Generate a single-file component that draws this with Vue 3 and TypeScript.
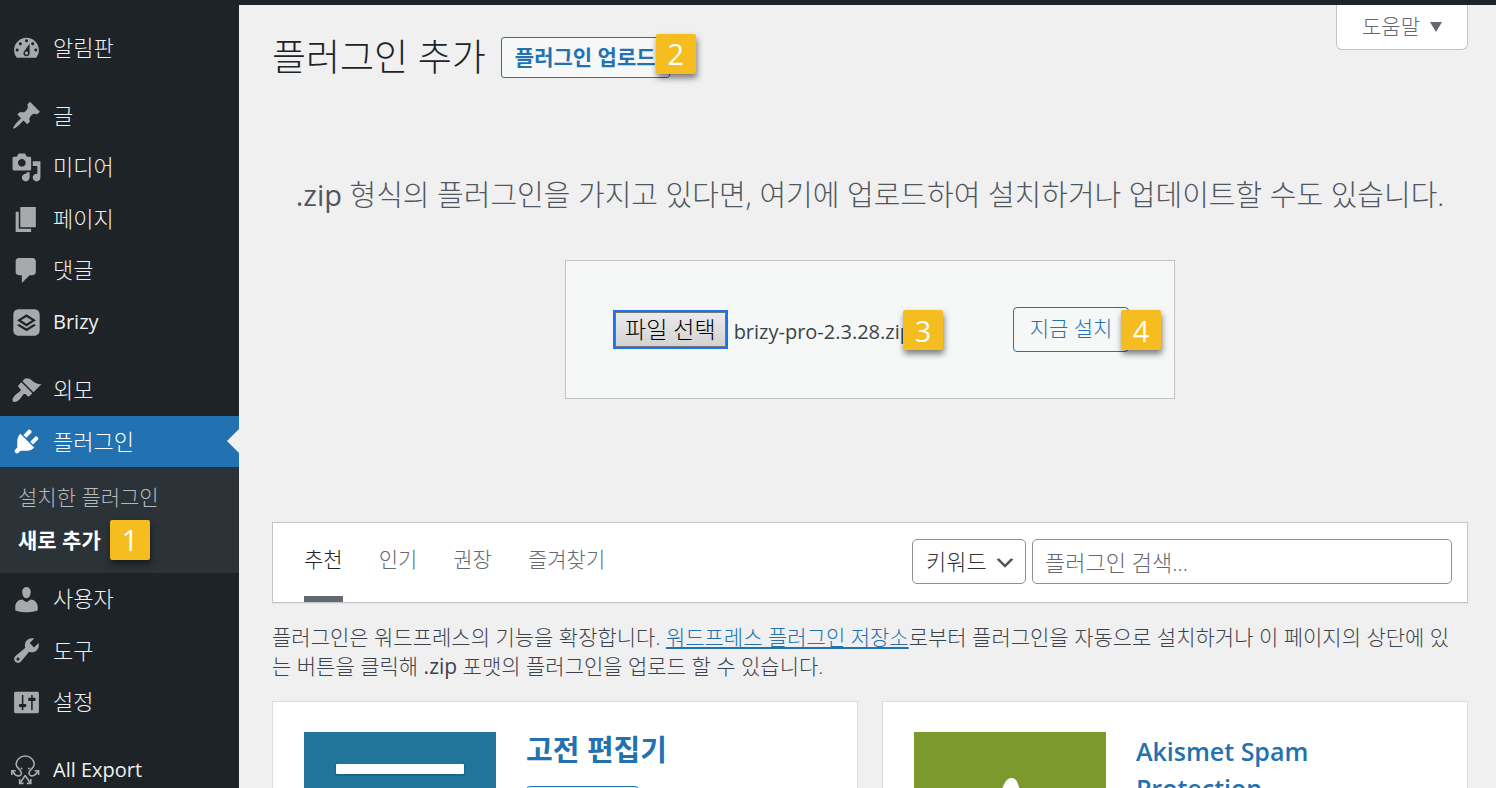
<script setup lang="ts">
import { ref } from 'vue'

interface SubItem {
  label: string
  current?: boolean
  step?: number
}

interface MenuItem {
  label: string
  icon: string
  latin?: boolean
  current?: boolean
  children?: SubItem[]
}

const icons: Record<string, string> = {
  dashboard:
    'M3.76 16h12.48c1.1-1.37 1.76-3.11 1.76-5 0-4.42-3.58-8-8-8s-8 3.58-8 8c0 1.89.66 3.63 1.76 5zM10 4c.55 0 1 .45 1 1s-.45 1-1 1-1-.45-1-1 .45-1 1-1zM6 6c.55 0 1 .45 1 1s-.45 1-1 1-1-.45-1-1 .45-1 1-1zm8 0c.55 0 1 .45 1 1s-.45 1-1 1-1-.45-1-1 .45-1 1-1zm-5.37 5.55L12 7v6c0 1.1-.9 2-2 2s-2-.9-2-2c0-.57.24-1.08.63-1.45zM4 10c.55 0 1 .45 1 1s-.45 1-1 1-1-.45-1-1 .45-1 1-1zm12 0c.55 0 1 .45 1 1s-.45 1-1 1-1-.45-1-1 .45-1 1-1zm-5 3c0-.55-.45-1-1-1s-1 .45-1 1 .45 1 1 1 1-.45 1-1z',
  post: 'M10.44 3.02l1.82-1.82 6.36 6.35-1.83 1.82c-1.05-.68-2.48-.57-3.41.36l-.75.75c-.92.93-1.04 2.35-.35 3.41l-1.83 1.82-2.41-2.41-2.8 2.79c-.42.42-3.38 2.71-3.8 2.29s1.86-3.39 2.28-3.81l2.79-2.79L4.1 9.36l1.83-1.82c1.05.69 2.48.57 3.4-.36l.75-.75c.93-.92 1.05-2.35.36-3.41z',
  media:
    'M13 11V4c0-.55-.45-1-1-1h-1.67L9 1H5L3.67 3H2c-.55 0-1 .45-1 1v7c0 .55.45 1 1 1h10c.55 0 1-.45 1-1zM7 4.5c1.38 0 2.5 1.12 2.5 2.5S8.38 9.5 7 9.5 4.5 8.38 4.5 7 5.62 4.5 7 4.5zM14 6h5v10.5c0 1.38-1.12 2.5-2.5 2.5S14 17.88 14 16.5s1.12-2.5 2.5-2.5c.17 0 .34.02.5.05V9h-3V6zm-4 8.05V13h2v3.5c0 1.38-1.12 2.5-2.5 2.5S7 17.88 7 16.5 8.12 14 9.5 14c.17 0 .34.02.5.05z',
  page: 'M6 15V2h10v13H6zm-1 1h8v2H3V5h2v11z',
  comments: 'M5 2h9c1.1 0 2 .9 2 2v7c0 1.1-.9 2-2 2h-2l-5 5v-5H5c-1.1 0-2-.9-2-2V4c0-1.1.9-2 2-2z',
  brizy:
    'M5.2 1.5h9.6c2.3 0 3.7 1.4 3.7 3.7v9.6c0 2.3-1.4 3.7-3.7 3.7H5.2c-2.3 0-3.7-1.4-3.7-3.7V5.2c0-2.3 1.4-3.7 3.7-3.7zM10 4.7L3.9 8.6 10 12.5l6.1-3.9zM10 6.4l3.5 2.2L10 10.8 6.5 8.6zM5.2 10.9L3.9 11.7 10 15.6l6.1-3.9-1.3-.8L10 13.9z',
  appearance:
    'M14.48 11.06L7.41 3.99l1.5-1.5c.5-.56 2.3-.47 3.51.32 1.21.8 1.43 1.28 2.91 2.1 1.18.64 2.45 1.26 4.45.85zm-.71.71L6.7 4.7 4.93 6.47c-.39.39-.39 1.02 0 1.41l1.06 1.06c.39.39.39 1.03 0 1.42-.6.6-1.43 1.11-2.21 1.69-.35.26-.7.53-1.01.84C1.43 14.23.4 16.08 1.4 17.07c.99 1 2.84-.03 4.18-1.36.31-.31.58-.66.85-1.02.57-.78 1.08-1.61 1.69-2.21.39-.39 1.02-.39 1.41 0l1.06 1.06c.39.39 1.02.39 1.41 0z',
  plugins:
    'M13.11 4.36L9.87 7.6 8 5.73l3.24-3.24c.35-.34 1.05-.2 1.56.32.52.51.66 1.21.31 1.55zm-8 1.77l.91-1.12 9.01 9.01-1.19.84c-.71.71-2.63 1.16-3.82 1.16H6.14L4.9 17.26c-.59.59-1.54.59-2.12 0-.59-.58-.59-1.53 0-2.12l1.24-1.24v-3.88c0-1.13.4-3.19 1.09-3.89zm7.26 3.97l3.24-3.24c.34-.35 1.04-.21 1.55.31.52.51.66 1.21.31 1.55l-3.24 3.25z',
  users:
    'M10 9.25c-2.27 0-2.73-3.44-2.73-3.44C7 4.02 7.82 2 9.97 2c2.16 0 2.98 2.02 2.71 3.81 0 0-.41 3.44-2.68 3.44zm0 2.57L12.72 10c2.39 0 4.52 2.33 4.52 4.53v2.49s-3.65 1.13-7.24 1.13c-3.65 0-7.24-1.13-7.24-1.13v-2.49c0-2.25 1.94-4.48 4.47-4.48z',
  tools:
    'M16.68 9.77c-1.34 1.34-3.3 1.67-4.95.99l-5.41 6.52c-.99.99-2.59.99-3.58 0s-.99-2.59 0-3.57l6.52-5.42c-.68-1.65-.35-3.61.99-4.95 1.28-1.28 3.12-1.62 4.72-1.06l-2.89 2.89 2.82 2.82 2.86-2.87c.53 1.58.18 3.39-1.08 4.65zM3.81 16.21c.4.39 1.04.39 1.43 0 .4-.4.4-1.04 0-1.43-.39-.4-1.03-.4-1.43 0-.39.39-.39 1.03 0 1.43z',
  settings:
    'M18 16V4c0-.55-.45-1-1-1H3c-.55 0-1 .45-1 1v12c0 .55.45 1 1 1h14c.55 0 1-.45 1-1zM8 11h1c.55 0 1 .45 1 1s-.45 1-1 1H8v1.5c0 .28-.22.5-.5.5s-.5-.22-.5-.5V13H6c-.55 0-1-.45-1-1s.45-1 1-1h1V5.5c0-.28.22-.5.5-.5s.5.22.5.5V11zm5-2h-1c-.55 0-1-.45-1-1s.45-1 1-1h1V5.5c0-.28.22-.5.5-.5s.5.22.5.5V7h1c.55 0 1 .45 1 1s-.45 1-1 1h-1v5.5c0 .28-.22.5-.5.5s-.5-.22-.5-.5V9z',
}

const menuGroups: MenuItem[][] = [
  [{ label: '알림판', icon: 'dashboard' }],
  [
    { label: '글', icon: 'post' },
    { label: '미디어', icon: 'media' },
    { label: '페이지', icon: 'page' },
    { label: '댓글', icon: 'comments' },
    { label: 'Brizy', icon: 'brizy', latin: true },
  ],
  [
    { label: '외모', icon: 'appearance' },
    {
      label: '플러그인',
      icon: 'plugins',
      current: true,
      children: [{ label: '설치한 플러그인' }, { label: '새로 추가', current: true, step: 1 }],
    },
    { label: '사용자', icon: 'users' },
    { label: '도구', icon: 'tools' },
    { label: '설정', icon: 'settings' },
  ],
  [{ label: 'All Export', icon: 'octopus', latin: true }],
]

const tabs = ['추천', '인기', '권장', '즐겨찾기']
const activeTab = ref('추천')
const searchType = ref('키워드')
const query = ref('')
</script>

<template>
  <div class="admin">
    <div class="adminbar"></div>
    <div class="columns">
      <nav class="sidebar" aria-label="메인 메뉴">
        <ul v-for="(group, g) in menuGroups" :key="g" class="group">
          <li v-for="item in group" :key="item.label">
            <a href="#" class="item" :class="{ current: item.current }">
              <svg v-if="item.icon === 'octopus'" class="icon line" viewBox="0 0 31 31" aria-hidden="true">
                <path d="M5.5 20.5c2.300 1 4.300 0 4.800-1.500.5-1.500-.4-2.600-1.500-4C6.900 12.800 5.200 11.500 5.200 9.600a9 8.600 0 0 1 18 0c0 1.900-1.700 3.200-3.600 5.400-1.100 1.400-2 2.500-1.500 4 .5 1.500 2.500 2.500 4.800 1.500M5.500 20.500C3 19.500 3.200 18 1.300 16M22.900 20.500c2.500-1 2.300-2.500 4.200-4.500M.8 20v-4.300h4M23.600 15.700h4V20M14.200 20.500l-5 7.300M14.200 20.500l5 7.300M8.600 24v4.400h4M19.800 24v4.400h-4" />
                <circle cx="10.500" cy="13.500" r="1" class="eye" />
                <circle cx="17.900" cy="13.500" r="1" class="eye" />
              </svg>
              <svg v-else class="icon" viewBox="0 0 20 20" aria-hidden="true">
                <path :d="icons[item.icon]" fill-rule="evenodd" />
              </svg>
              <span :class="{ latin: item.latin }">{{ item.label }}</span>
            </a>
            <ul v-if="item.children" class="submenu">
              <li v-for="sub in item.children" :key="sub.label">
                <a href="#" :class="{ current: sub.current }">
                  {{ sub.label }}<span v-if="sub.step" class="step step-menu">{{ sub.step }}</span>
                </a>
              </li>
            </ul>
          </li>
        </ul>
      </nav>

      <main class="content">
        <button type="button" class="help">도움말 <span class="triangle"></span></button>

        <header class="heading">
          <h1>플러그인 추가</h1>
          <a href="#" class="upload-link">플러그인 업로드<span class="step step-upload">2</span></a>
        </header>

        <section class="upload">
          <p><span class="zip">.zip</span> 형식의 플러그인을 가지고 있다면, 여기에 업로드하여 설치하거나 업데이트할 수도 있습니다.</p>
          <form class="upload-form" @submit.prevent>
            <div class="file">
              <label class="file-button" for="pluginzip">파일 선택<input id="pluginzip" type="file" accept=".zip" /></label>
              <span class="file-name latin">brizy-pro-2.3.28.zip</span>
              <span class="step step-file">3</span>
            </div>
            <button type="submit" class="install">지금 설치<span class="step step-install">4</span></button>
          </form>
        </section>

        <div class="filter">
          <div class="tabs">
            <a
              v-for="tab in tabs"
              :key="tab"
              href="#"
              :class="{ active: tab === activeTab }"
              @click.prevent="activeTab = tab"
              >{{ tab }}</a
            >
          </div>
          <form class="search" @submit.prevent>
            <div class="select">
              <select v-model="searchType" aria-label="검색 기준">
                <option>키워드</option>
                <option>글쓴이</option>
                <option>태그</option>
              </select>
              <svg viewBox="0 0 20 20" aria-hidden="true"><path d="M5 6l5 5 5-5 2 1-7 7-7-7 2-1z" /></svg>
            </div>
            <input v-model="query" type="search" placeholder="플러그인 검색..." aria-label="플러그인 검색" />
          </form>
        </div>

        <p class="intro">
          플러그인은 워드프레스의 기능을 확장합니다. <a href="#">워드프레스 플러그인 저장소</a>로부터 플러그인을 자동으로 설치하거나 이 페이지의 상단에 있는 버튼을 클릭해 <span class="zip">.zip</span> 포맷의 플러그인을 업로드 할 수 있습니다.
        </p>

        <div class="cards">
          <article class="card">
            <svg class="art" viewBox="0 0 192 192" aria-hidden="true">
              <rect width="192" height="192" fill="#21759b" />
              <rect x="31" y="32" width="130" height="12" rx="2" fill="#14597a" opacity=".5" />
              <rect x="32" y="32" width="128" height="10" rx="1" fill="#fff" />
            </svg>
            <div class="info">
              <h3><a href="#">고전 편집기</a></h3>
              <button type="button" class="card-button">지금 설치</button>
            </div>
          </article>
          <article class="card">
            <svg class="art" viewBox="0 0 192 192" aria-hidden="true">
              <rect width="192" height="192" fill="#7b992c" />
              <path d="M87 60c3-9 6-14 10-14s6 2 8 9l25 85h-20l-14-58-20 58H58z" fill="#fff" />
            </svg>
            <div class="info">
              <h3><a href="#" class="latin">Akismet Spam Protection</a></h3>
              <button type="button" class="card-button">지금 설치</button>
            </div>
          </article>
        </div>
      </main>
    </div>
  </div>
</template>

<style>
body {
  overflow: hidden;
  background: #f0f0f1;
}
</style>

<style scoped>
.admin {
  height: 100vh;
  overflow: hidden;
  color: #3c434a;
  background: #f0f0f1;
  font-family: 'Open Sans', 'Noto Sans CJK KR', sans-serif;
  font-size: 21px;
  font-weight: 300;
  line-height: 1.4;
}

.admin *,
.admin *::before,
.admin *::after {
  box-sizing: border-box;
}

a {
  color: #2271b1;
}

ul {
  margin: 0;
  padding: 0;
  list-style: none;
}

button,
input,
select {
  margin: 0;
  font: inherit;
}

.latin {
  font-size: 20px;
  font-weight: 400;
}

.zip {
  font-weight: 400;
}

.adminbar {
  height: 5px;
  background: #1d2327;
}

.columns {
  display: flex;
  align-items: stretch;
}

/* Sidebar */
.sidebar {
  display: flex;
  flex: none;
  flex-direction: column;
  gap: 16px;
  width: 239px;
  min-height: 100vh;
  padding-top: 17px;
  background: #1d2327;
}

.item {
  position: relative;
  display: flex;
  align-items: center;
  gap: 11px;
  min-height: 51px;
  padding: 11px 11px 12px;
  color: #f0f0f1;
  font-size: 22px;
  line-height: 1.3;
  text-decoration: none;
}

.item .latin {
  line-height: 29px;
}

.item.current {
  color: #fff;
  background: #2271b1;
}

.item.current::after {
  position: absolute;
  top: 50%;
  right: 0;
  margin-top: -12px;
  border: solid transparent;
  border-width: 12px 12px 12px 0;
  border-right-color: #f0f0f1;
  content: '';
}

.icon {
  flex: none;
  width: 31px;
  height: 31px;
  margin: -1px 0 -3px;
  fill: #a7aaad;
}

.current .icon {
  fill: #fff;
}

.icon.line {
  fill: none;
  stroke: #a7aaad;
  stroke-width: 1.6;
}

.icon .eye {
  fill: #a7aaad;
  stroke: none;
}

.submenu {
  padding: 10px 0 11px;
  background: #2c3338;
}

.submenu a {
  position: relative;
  display: block;
  width: fit-content;
  padding: 6px 0 7px 18px;
  color: #b4b9be;
  text-decoration: none;
}

.submenu a.current {
  color: #fff;
  font-weight: 600;
}

/* Numbered step markers */
.step {
  position: absolute;
  z-index: 1;
  display: flex;
  align-items: center;
  justify-content: center;
  width: 40px;
  height: 40px;
  border-radius: 2px;
  color: #fff;
  background: #f5bd1f;
  box-shadow: 1px 4px 6px rgb(0 0 0 / 50%);
  font-size: 29px;
  font-weight: 400;
  line-height: 1;
}

.step-menu {
  top: 0;
  left: 110px;
}

.step-upload {
  top: -4px;
  left: 154px;
}

.step-file {
  top: 3px;
  left: 290px;
}

.step-install {
  top: 2px;
  left: 107px;
}

/* Main column */
.content {
  position: relative;
  flex: 1;
  min-width: 0;
  padding: 26px 28px 0 33px;
}

.help {
  position: absolute;
  top: 0;
  right: 28px;
  display: flex;
  align-items: center;
  gap: 10px;
  height: 45px;
  padding: 0 25px;
  border: 1px solid #c3c4c7;
  border-top: 0;
  border-radius: 0 0 6px 6px;
  color: #646970;
  background: #fff;
}

.triangle {
  border: solid transparent;
  border-width: 10px 6px 0;
  border-top-color: #646970;
}

.heading {
  display: flex;
  align-items: center;
  gap: 15px;
}

h1 {
  margin: 0;
  color: #1d2327;
  font-size: 37px;
  font-weight: 300;
  line-height: 52px;
}

.upload-link {
  position: relative;
  padding: 4px 13px;
  border: 1px solid #2271b1;
  border-radius: 3px;
  background: #f6f7f7;
  font-weight: 600;
  line-height: 31px;
  text-decoration: none;
}

.upload {
  display: flex;
  flex-direction: column;
  align-items: center;
  padding: 87px 0 123px;
}

.upload p {
  margin: 0;
  color: #50575e;
  font-size: 29px;
  line-height: 50px;
  white-space: nowrap;
}

.upload-form {
  display: flex;
  align-items: flex-start;
  justify-content: space-between;
  width: 610px;
  margin-top: 40px;
  padding: 46px 45px 46px 47px;
  border: 1px solid #c3c4c7;
  background: #f6f7f7;
}

.file {
  position: relative;
  display: flex;
  align-items: center;
  gap: 6px;
  padding-top: 3px;
}

.file-button {
  position: relative;
  padding: 0 10px;
  border: 2px solid #1a73e8;
  color: #000;
  background: linear-gradient(#ececec, #d2d2d2);
  box-shadow: inset 0 0 0 1px #767676;
  font-size: 23px;
  line-height: 35px;
}

.file-button input {
  position: absolute;
  inset: 0;
  width: 100%;
  opacity: 0;
}

.file-name {
  padding-top: 4px;
}

.install {
  position: relative;
  width: 116px;
  height: 45px;
  padding: 0 0 1px;
  border: 1px solid #2271b1;
  border-radius: 4px;
  color: #2271b1;
  background: #f6f7f7;
}

.filter {
  display: flex;
  justify-content: space-between;
  padding: 0 15px 0 31px;
  border: 1px solid #c3c4c7;
  background: #fff;
  box-shadow: 0 1px 1px rgb(0 0 0 / 4%);
}

.tabs {
  display: flex;
  gap: 36px;
}

.tabs a {
  padding: 21px 0 22px;
  border-bottom: 6px solid transparent;
  color: #646970;
  line-height: 30px;
  text-decoration: none;
}

.tabs .active {
  border-color: #646970;
  color: #1d2327;
}

.search {
  display: flex;
  gap: 6px;
  padding-top: 16px;
}

.select {
  position: relative;
}

.search select,
.search input {
  height: 45px;
  border: 1px solid #8c8f94;
  border-radius: 5px;
  color: #2c3338;
  background: #fff;
  font-size: 22px;
  appearance: none;
}

.search select {
  width: 114px;
  padding: 0 12px 0 13px;
}

.search input {
  width: 420px;
  padding: 0 12px;
}

.search input::placeholder {
  color: #646970;
  opacity: 1;
}

.select svg {
  position: absolute;
  top: 12px;
  right: 9px;
  width: 24px;
  height: 24px;
  fill: #50575e;
  pointer-events: none;
}

.intro {
  margin: 20px 0 19px;
  word-break: break-all;
}

.cards {
  display: grid;
  grid-template-columns: 1fr 1fr;
  gap: 24px;
}

.card {
  display: flex;
  gap: 30px;
  padding: 30px 31px;
  border: 1px solid #dcdcde;
  background: #fff;
}

.art {
  flex: none;
  width: 192px;
  height: 192px;
}

.info {
  max-width: 220px;
}

h3 {
  margin: 0 0 18px;
  font-size: 29px;
  font-weight: 600;
  line-height: 36px;
}

h3 a {
  text-decoration: none;
}

h3 .latin {
  font-size: 25px;
  font-weight: 600;
}

.card-button {
  width: 113px;
  height: 45px;
  padding: 0;
  border: 1px solid #2271b1;
  border-radius: 4px;
  color: #2271b1;
  background: #f6f7f7;
}
</style>
